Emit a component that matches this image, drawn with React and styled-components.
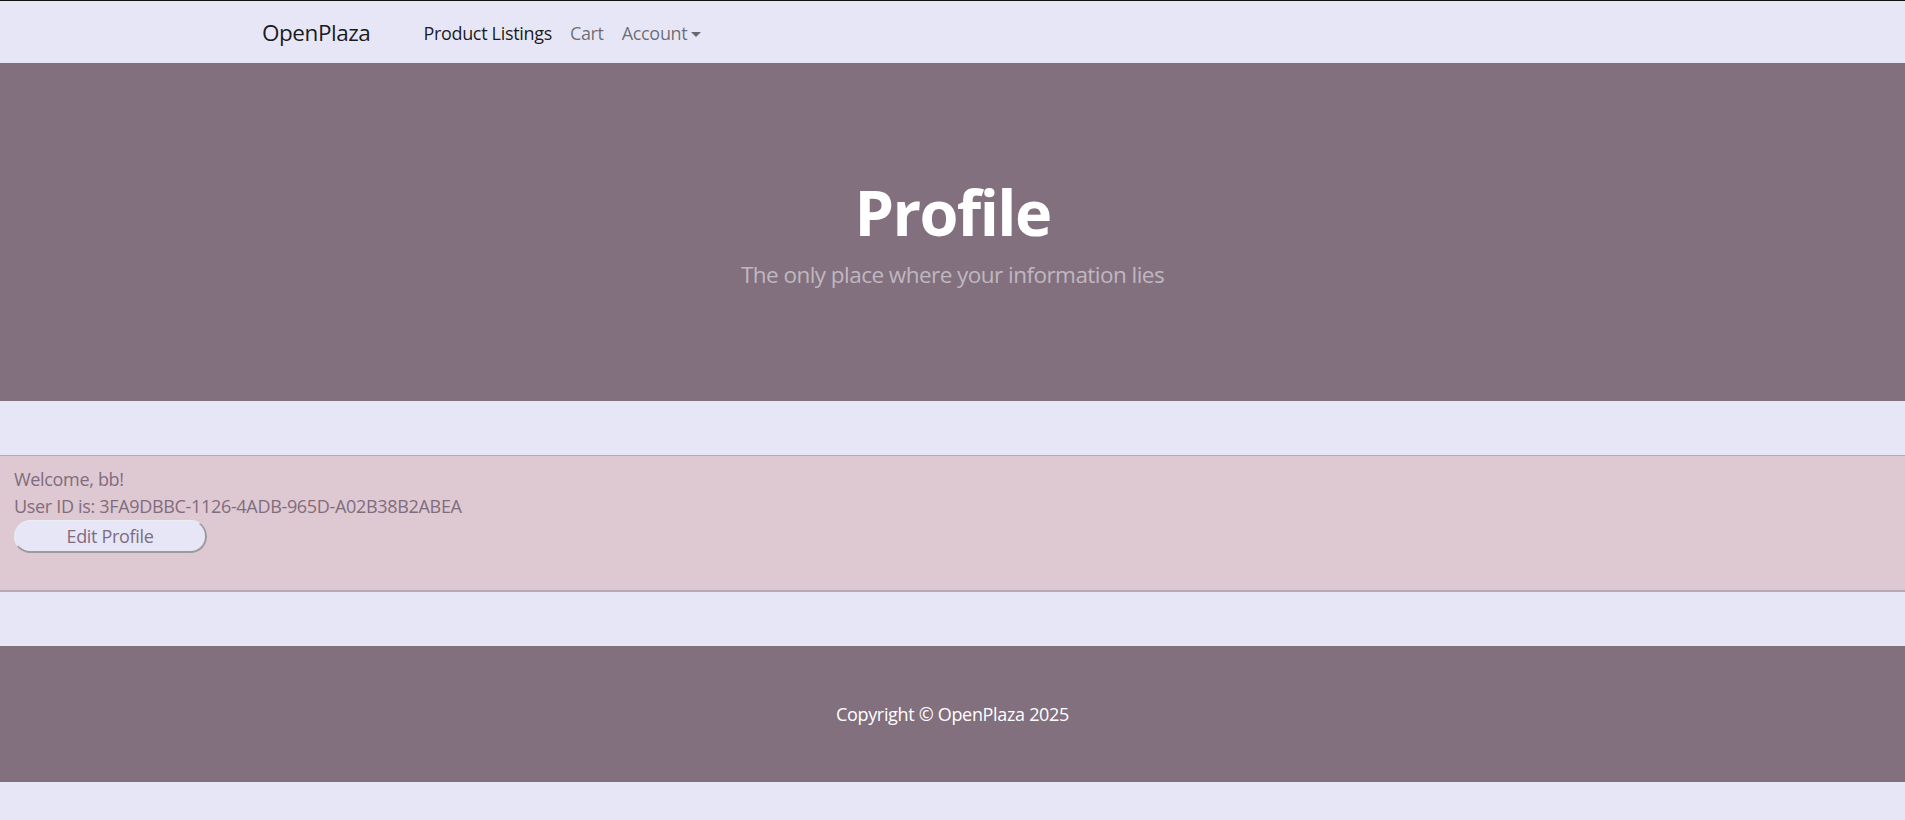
import React from "react";
import styled, { createGlobalStyle } from "styled-components";

const GlobalStyle = createGlobalStyle`
  html, body {
    margin: 0;
    padding: 0;
    background: #e6e6f7;
    font-family: "Open Sans", "Noto Sans", sans-serif;
    font-size: 18px;
    line-height: 1.5;
    letter-spacing: -0.018em;
  }
  * { box-sizing: border-box; }
`;

const Page = styled.div`
  display: flex;
  flex-direction: column;
`;

const NavBar = styled.nav`
  height: 63px;
  border-top: 1px solid #111;
  background: #e6e6f7;
  display: flex;
  align-items: center;
  padding: 2px 0 0 262px;
`;

const Brand = styled.a`
  font-size: 22.5px;
  line-height: 1.5;
  color: rgba(0, 0, 0, 0.9);
  text-decoration: none;
  margin-right: 44px;
  letter-spacing: -0.02em;
`;

const NavList = styled.ul`
  display: flex;
  list-style: none;
  margin: 0;
  padding: 0;
`;

const NavLink = styled.a`
  display: flex;
  align-items: center;
  padding: 0 9px;
  font-size: 18px;
  line-height: 27px;
  text-decoration: none;
  color: ${(p) => (p.$active ? "rgba(0,0,0,0.9)" : "rgba(0,0,0,0.55)")};
`;

const Caret = styled.span`
  display: inline-block;
  margin-left: 4px;
  margin-top: 2px;
  width: 0;
  height: 0;
  border-top: 5.4px solid currentColor;
  border-left: 5.4px solid transparent;
  border-right: 5.4px solid transparent;
`;

const Hero = styled.header`
  background: #82707f;
  height: 338px;
  display: flex;
  flex-direction: column;
  align-items: center;
  justify-content: center;
  padding-top: 2px;
`;

const Title = styled.h1`
  margin: 0 0 9px;
  font-size: 63px;
  line-height: 1.2;
  font-weight: 700;
  color: #fff;
  letter-spacing: -0.025em;
`;

const Lead = styled.p`
  margin: 0;
  font-size: 22.5px;
  line-height: 1.5;
  font-weight: 400;
  color: rgba(255, 255, 255, 0.5);
  letter-spacing: -0.024em;
`;

const Card = styled.section`
  margin: 54px 0;
  background: #dec8d1;
  border-top: 1px solid #b8a7b4;
  border-bottom: 2px solid #b8a7b4;
  padding: 9.5px 14px 37px;
  color: #7f6d7e;
  font-size: 18px;
  line-height: 27px;
`;

const Line = styled.div``;

const EditButton = styled.button`
  display: block;
  width: 193px;
  height: 33px;
  margin-top: 0.5px;
  padding: 0;
  border-radius: 17px;
  border-style: solid;
  border-width: 1px 2px 2px 1px;
  border-color: #ececf4 #9b9b9f #9b9b9f #ececf4;
  background: #e6e6f7;
  color: #7f6d7e;
  font-family: inherit;
  font-size: 18px;
  line-height: 27px;
  letter-spacing: inherit;
`;

const Footer = styled.footer`
  background: #82707f;
  height: 136px;
  display: flex;
  align-items: center;
  justify-content: center;
  color: #fff;
  font-size: 18px;
  line-height: 27px;
  padding-top: 1px;
`;

export default function App() {
  return (
    <>
      <GlobalStyle />
      <Page>
        <NavBar>
          <Brand href="#">OpenPlaza</Brand>
          <NavList>
            <li><NavLink href="#" $active>Product Listings</NavLink></li>
            <li><NavLink href="#">Cart</NavLink></li>
            <li><NavLink href="#">Account<Caret /></NavLink></li>
          </NavList>
        </NavBar>
        <Hero>
          <Title>Profile</Title>
          <Lead>The only place where your information lies</Lead>
        </Hero>
        <Card>
          <Line>Welcome, bb!</Line>
          <Line>User ID is: 3FA9DBBC-1126-4ADB-965D-A02B38B2ABEA</Line>
          <EditButton>Edit Profile</EditButton>
        </Card>
        <Footer>Copyright © OpenPlaza 2025</Footer>
      </Page>
    </>
  );
}
